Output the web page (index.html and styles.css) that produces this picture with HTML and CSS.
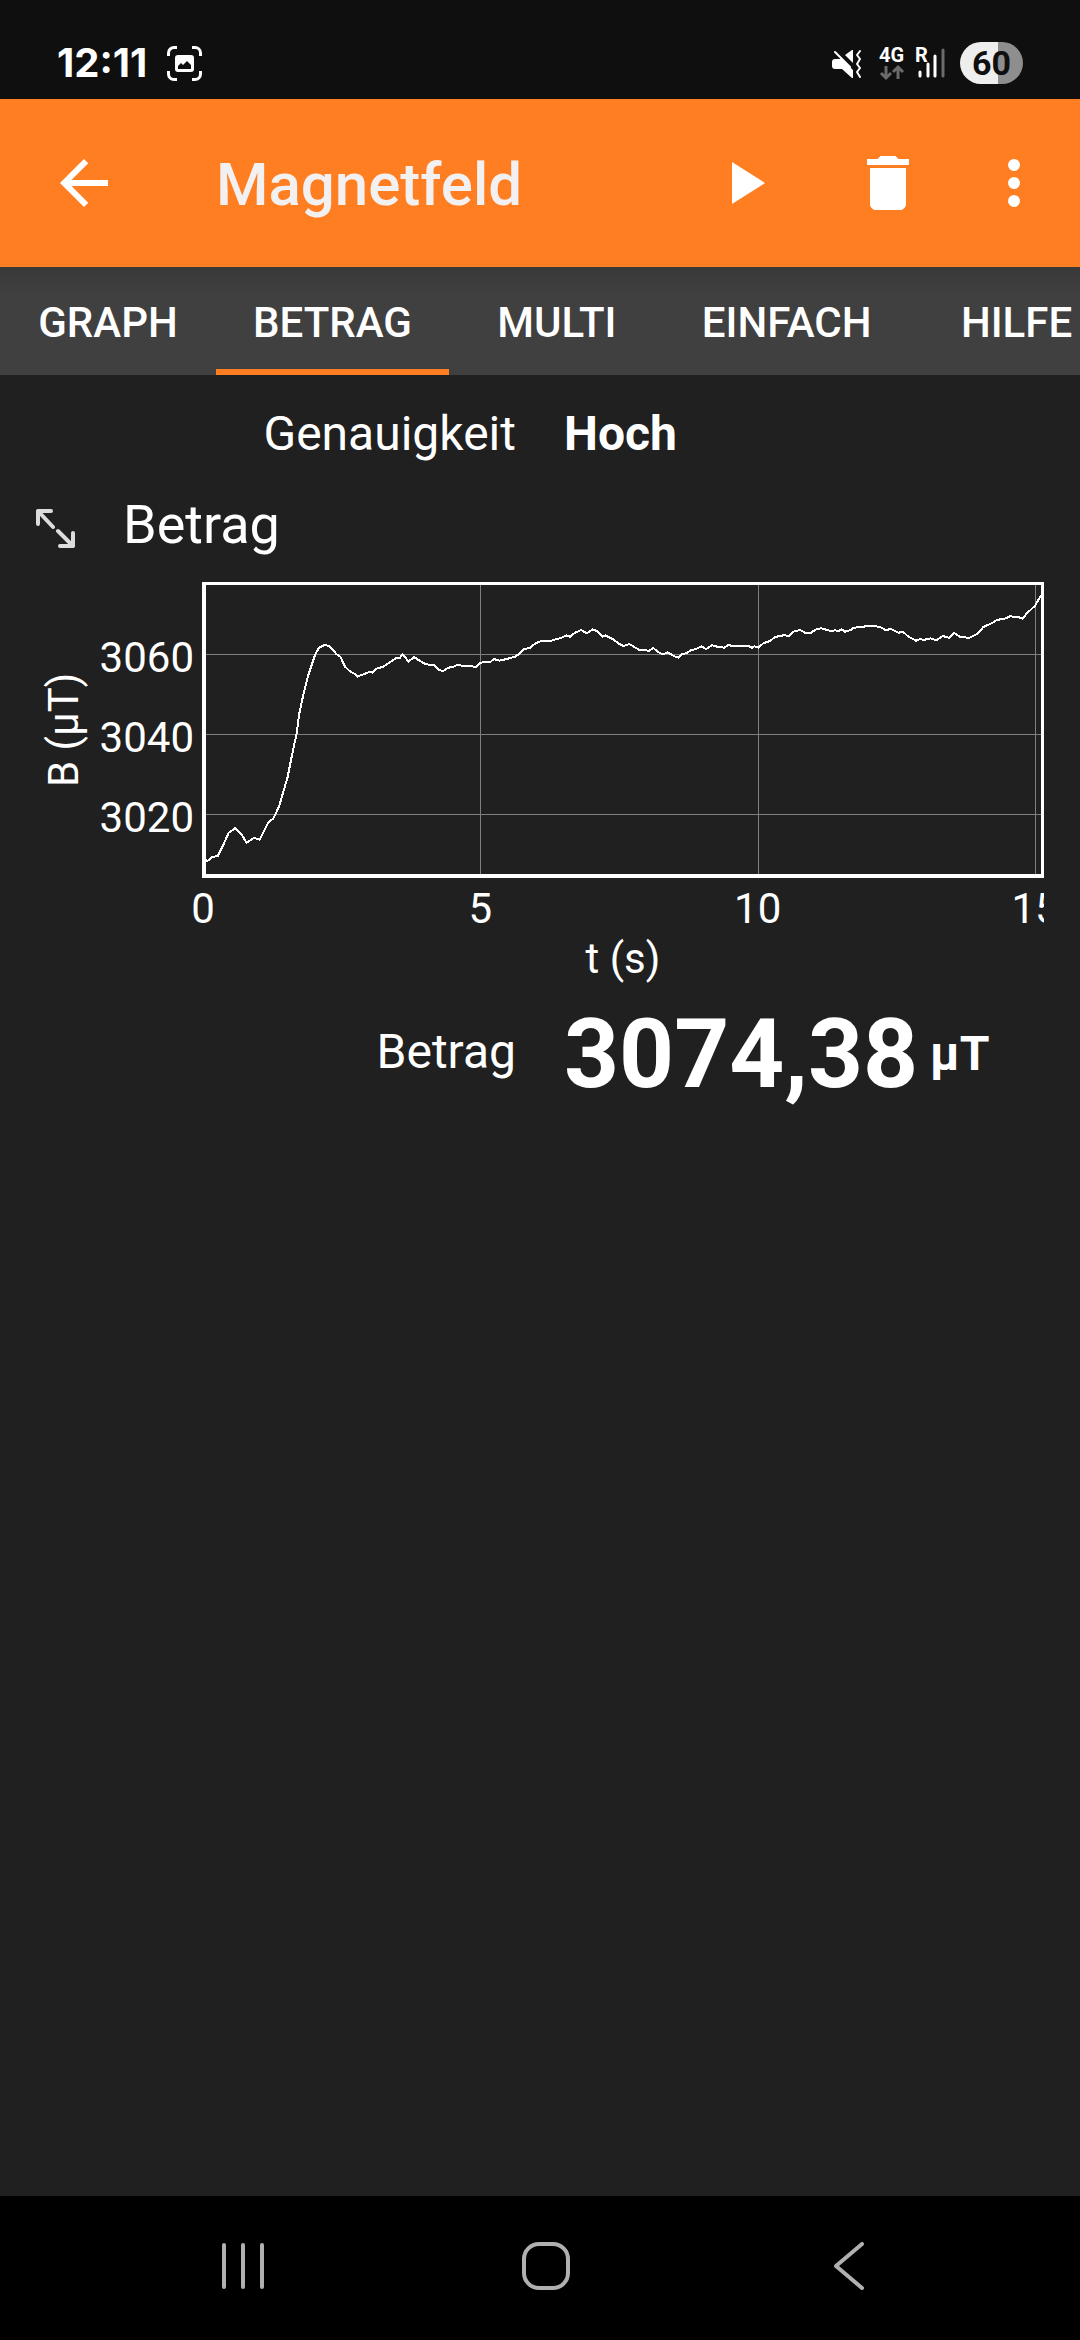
FILE: index.html
```html
<!DOCTYPE html>
<html lang="de">
<head>
<meta charset="utf-8">
<meta name="viewport" content="width=device-width, initial-scale=1">
<title>Magnetfeld</title>
<link rel="stylesheet" href="styles.css">
</head>
<body>
<div class="status-bar">
  <span class="clock">12:11</span>
  <svg class="capture-icon" viewBox="0 0 35 35" aria-hidden="true">
    <path d="M1.5 10V7A5.500 5.500 0 0 1 7 1.500h3M25 1.500h3A5.500 5.500 0 0 1 33.500 7v3M33.500 25v3a5.500 5.500 0 0 1-5.500 5.500h-3M10 33.500H7A5.500 5.500 0 0 1 1.500 28v-3" fill="none" stroke="#fff" stroke-width="3"/>
    <path fill="#fff" fill-rule="evenodd" d="M11 9h13a3 3 0 0 1 3 3v11a3 3 0 0 1-3 3H11a3 3 0 0 1-3-3V12a3 3 0 0 1 3-3zM11 23h13v-4l-4-4-4 4-2-2-3 3z"/>
  </svg>
  <span class="spacer"></span>
  <svg class="mute-icon" viewBox="0 0 29 32" aria-hidden="true">
    <path fill="#fff" d="M7 12h3L21 23v8h-1L10 22H3a3 3 0 0 1-3-3v-4a3 3 0 0 1 3-3zM13 8l7-5h1v13z"/>
    <path d="M3 5l15 15M28 4l-3 4 3 4-3 5 3 4-3 4 3 5" fill="none" stroke="#fff" stroke-width="2" stroke-linecap="round" stroke-linejoin="round"/>
  </svg>
  <svg class="network-icon" viewBox="0 0 26 34">
    <text x="0" y="16" class="signal-text">4G</text>
    <path d="M7 20v12M2 27l5 5 5-5M19 33V21M14 26l5-5 5 5" fill="none" stroke="#6b6b6b" stroke-width="3"/>
  </svg>
  <svg class="signal-icon" viewBox="0 0 31 34">
    <text x="0" y="16" class="signal-text">R</text>
    <path d="M5 26v4M13 18v12M20 10v20" stroke="#fff" stroke-width="3" stroke-linecap="round"/>
    <path d="M28 4v26" stroke="#6b6b6b" stroke-width="3" stroke-linecap="round"/>
  </svg>
  <span class="battery">60</span>
</div>

<header class="app-bar">
  <button class="icon-button" type="button" aria-label="Zurück">
    <svg viewBox="0 0 24 24"><path d="M20 11H7.830l5.590-5.590L12 4l-8 8 8 8 1.410-1.410L7.830 13H20v-2z"/></svg>
  </button>
  <h1 class="app-title">Magnetfeld</h1>
  <button class="icon-button" type="button" aria-label="Start">
    <svg viewBox="0 0 24 24"><path d="M8 5v14l11-7z"/></svg>
  </button>
  <button class="icon-button delete-button" type="button" aria-label="Löschen">
    <svg viewBox="0 0 24 24"><path d="M6 19c0 1.100.9 2 2 2h8c1.100 0 2-.9 2-2V7H6v12zM19 4h-3.500l-1-1h-5l-1 1H5v2h14V4z"/></svg>
  </button>
  <button class="icon-button menu-button" type="button" aria-label="Weitere Optionen">
    <svg viewBox="0 0 24 24"><circle cx="12" cy="6" r="2"/><circle cx="12" cy="12" r="2"/><circle cx="12" cy="18" r="2"/></svg>
  </button>
</header>

<nav class="tabs">
  <a class="tab" href="#graph">GRAPH</a>
  <a class="tab tab-active" href="#betrag" aria-current="page">BETRAG</a>
  <a class="tab" href="#multi">MULTI</a>
  <a class="tab" href="#einfach">EINFACH</a>
  <a class="tab" href="#hilfe">HILFE</a>
</nav>

<main class="content">
  <div class="reading">
    <span class="reading-label">Genauigkeit</span>
    <strong class="reading-value">Hoch</strong>
  </div>

  <section class="graph">
    <div class="graph-head">
      <button class="expand-button" type="button" aria-label="Vergrößern">
        <svg viewBox="0 0 39 39"><path d="M15 2H2v13M2 2l15 16M24 37h13V24M37 37L22 22" fill="none" stroke="#dcdcdc" stroke-width="4" stroke-linecap="round" stroke-linejoin="round"/></svg>
      </button>
      <h2 class="graph-title">Betrag</h2>
    </div>
    <div class="chart">
      <div class="y-title">B (µT)</div>
      <div class="y-axis"><span>3060</span><span>3040</span><span>3020</span></div>
      <div class="plot">
        <svg viewBox="618 75 2505 867" preserveAspectRatio="none" role="img" aria-label="B (µT) über t (s)">
          <path class="grid-line" d="M618 283H3123M618 523H3123M618 763H3123M1441 75V942M2275 75V942M3106 75V942"/>
          <polyline class="series" points="618,900 622,903 638,890 653,889 670,855 686,818 705,805 726,825 739,848 762,834 779,839 806,786 820,776 838,737 850,695 862,655 875,590 890,520 898,460 912,395 925,345 945,285 957,263 975,254 990,260 1010,283 1021,290 1035,320 1050,334 1063,341 1072,350 1090,343 1110,335 1118,338 1130,326 1150,320 1170,306 1188,295 1200,293 1208,283 1215,290 1225,305 1242,291 1260,303 1278,313 1302,315 1317,330 1330,333 1345,323 1360,321 1370,315 1395,318 1428,320 1442,308 1472,305 1482,297 1498,302 1520,297 1545,290 1560,280 1572,268 1590,263 1608,249 1628,242 1650,243 1685,233 1700,226 1710,230 1725,218 1744,210 1760,220 1778,208 1790,213 1808,230 1816,226 1838,237 1855,250 1870,258 1888,252 1918,270 1948,272 1960,264 1975,277 1990,283 2003,277 2022,288 2035,293 2045,283 2058,280 2072,271 2090,266 2104,259 2118,267 2136,256 2155,261 2173,263 2185,254 2198,259 2230,259 2245,258 2256,263 2263,259 2275,263 2290,250 2310,243 2325,231 2350,226 2367,227 2380,215 2400,210 2415,218 2430,220 2450,207 2465,205 2495,214 2505,210 2515,214 2525,208 2535,215 2550,211 2562,203 2590,201 2600,197 2638,200 2655,209 2663,211 2670,206 2695,218 2710,216 2725,230 2748,242 2760,237 2770,240 2792,235 2810,241 2828,228 2848,234 2862,219 2880,230 2908,234 2934,220 2950,201 2975,190 2990,180 3018,175 3030,169 3055,171 3067,176 3080,161 3105,137 3123,106"/>
        </svg>
      </div>
      <div class="x-axis"><span>0</span><span>5</span><span>10</span><span>15</span></div>
      <div class="x-title">t (s)</div>
    </div>
  </section>

  <div class="reading reading-main">
    <span class="reading-label">Betrag</span>
    <strong class="reading-value"><span class="reading-large">3074,38</span><span>µT</span></strong>
  </div>
</main>

<footer class="system-nav">
  <button class="nav-button" type="button" aria-label="Letzte Apps">
    <svg viewBox="0 0 48 48"><path d="M5 3v42M24 3v42M43 3v42"/></svg>
  </button>
  <button class="nav-button" type="button" aria-label="Startseite">
    <svg viewBox="0 0 48 48"><rect x="2" y="2" width="44" height="44" rx="15"/></svg>
  </button>
  <button class="nav-button" type="button" aria-label="Zurück">
    <svg viewBox="0 0 48 48"><path d="M37 2L11 24l26 22"/></svg>
  </button>
</footer>
</body>
</html>
```
FILE: styles.css
```css
* {
  box-sizing: border-box;
}

body {
  margin: 0;
  min-height: 100vh;
  display: flex;
  flex-direction: column;
  background: #202020;
  color: #fff;
  font-family: Roboto, sans-serif;
  font-size: 48px;
  line-height: 56px;
  overflow-x: hidden;
}

button {
  margin: 0;
  padding: 0;
  border: 0;
  background: none;
  color: inherit;
  display: flex;
  align-items: center;
  justify-content: center;
}

svg {
  display: block;
  flex: none;
}

/* Status bar */
.status-bar {
  display: flex;
  align-items: center;
  padding: 42px 57px 15px;
  background: #0f0f0f;
}

.clock {
  font: 700 40px/42px Inter, sans-serif;
}

.capture-icon {
  width: 35px;
  height: 35px;
  margin-left: 20px;
}

.spacer {
  flex: 1;
}

.mute-icon {
  width: 29px;
  height: 32px;
}

.network-icon {
  width: 26px;
  height: 34px;
  margin: 0 10px 0 18px;
  overflow: visible;
}

.signal-icon {
  width: 31px;
  height: 34px;
  margin-right: 14px;
  overflow: visible;
}

.signal-text {
  font: 700 20px Roboto, sans-serif;
  fill: #fff;
}

.battery {
  width: 63px;
  border-radius: 21px;
  background: linear-gradient(90deg, #eee 60%, #8e8e8e 60%);
  color: #0f0f0f;
  font: 700 34px/42px Roboto, sans-serif;
  text-align: center;
}

/* App bar */
.app-bar {
  display: flex;
  align-items: center;
  padding: 48px 30px 48px 48px;
  background: #ff7e22;
}

.icon-button svg {
  width: 72px;
  height: 72px;
  fill: #fff;
}

.app-title {
  flex: 1;
  margin: 0 0 0 96px;
  padding-top: 4px;
  color: #f2f0f0;
  font-size: 60px;
  font-weight: 500;
  line-height: 68px;
}

.delete-button {
  margin-left: 72px;
}

.menu-button {
  margin-left: 54px;
}

/* Tabs */
.tabs {
  display: flex;
  overflow: hidden;
  background: linear-gradient(#393939, #404040 30px);
}

.tab {
  flex: none;
  min-width: 216px;
  padding: 10px 37px 0;
  border-bottom: 6px solid transparent;
  color: #fff;
  font-size: 42px;
  font-weight: 500;
  line-height: 92px;
  text-align: center;
  text-decoration: none;
}

.tab-active {
  border-bottom-color: #ff7e22;
}

/* Content */
.content {
  flex: 1;
  padding-top: 31px;
}

.reading {
  display: grid;
  grid-template-columns: 1fr 1fr;
  column-gap: 48px;
  align-items: center;
}

.reading-label {
  text-align: right;
}

.reading-main .reading-label {
  padding-bottom: 4px;
}

.reading-value {
  display: flex;
  align-items: center;
  gap: 12px;
  font-weight: 700;
}

.reading-large {
  font-size: 96px;
  line-height: 112px;
}

.graph {
  padding: 27px 36px 14px 0;
}

.graph-head {
  display: flex;
  align-items: center;
  padding-bottom: 21px;
}

.expand-button {
  width: 72px;
  height: 72px;
  margin-left: 19px;
  padding-top: 6px;
}

.expand-button svg {
  width: 39px;
  height: 39px;
}

.graph-title {
  margin: 0 0 0 32px;
  font-size: 54px;
  font-weight: 400;
  line-height: 64px;
}

.chart {
  display: grid;
  grid-template-columns: 50px 105px 1fr;
  grid-template-rows: 296px auto auto;
  padding-left: 39px;
  font-size: 42px;
  line-height: 50px;
}

.y-title {
  writing-mode: vertical-rl;
  transform: rotate(180deg);
  text-align: center;
}

.y-axis {
  display: flex;
  flex-direction: column;
  padding-top: 36px;
  line-height: 80px;
  text-align: right;
}

.plot {
  margin-left: 8px;
  border: solid #fff;
  border-width: 3px 3px 4px 4px;
}

.plot svg {
  width: 100%;
  height: 289px;
}

.grid-line,
.series {
  fill: none;
  shape-rendering: crispEdges;
  vector-effect: non-scaling-stroke;
}

.grid-line {
  stroke: #808080;
  stroke-width: 1px;
}

.series {
  stroke: #fff;
  stroke-width: 2px;
}

/* Left padding keeps the centred first tick inside the clipped axis */
.x-axis {
  grid-column: 3;
  display: flex;
  justify-content: space-between;
  margin-left: -32px;
  padding: 6px 9px 0 41px;
  overflow: hidden;
}

.x-axis span {
  display: flex;
  justify-content: center;
  width: 0;
}

.x-title {
  grid-column: 3;
  padding-left: 8px;
  text-align: center;
}

/* System navigation */
.system-nav {
  display: grid;
  grid-template-columns: repeat(3, 1fr);
  padding: 46px 80px 50px 92px;
  background: #000;
}

.nav-button svg {
  width: 48px;
  height: 48px;
  fill: none;
  stroke: #b0b0b0;
  stroke-width: 4px;
  stroke-linecap: round;
  stroke-linejoin: round;
}
```
